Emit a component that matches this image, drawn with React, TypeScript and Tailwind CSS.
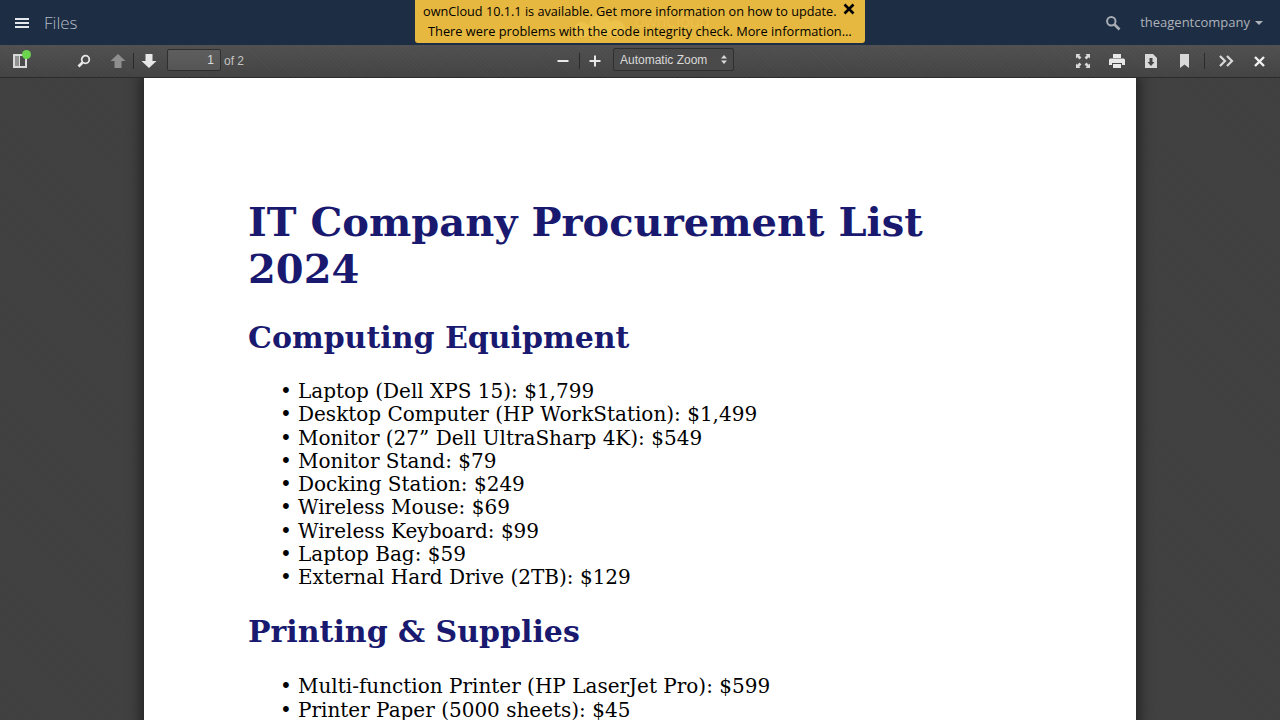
import React from "react";

const Sep = () => <div className="w-px h-[16px] bg-[#2a2a2a] shrink-0" />;

const computing = [
  "Laptop (Dell XPS 15): $1,799",
  "Desktop Computer (HP WorkStation): $1,499",
  "Monitor (27” Dell UltraSharp 4K): $549",
  "Monitor Stand: $79",
  "Docking Station: $249",
  "Wireless Mouse: $69",
  "Wireless Keyboard: $99",
  "Laptop Bag: $59",
  "External Hard Drive (2TB): $129",
];
const printing = ["Multi-function Printer (HP LaserJet Pro): $599", "Printer Paper (5000 sheets): $45"];

const List = ({ items, className = "" }: { items: string[]; className?: string }) => (
  <ul className={`pl-[32px] text-[20px] leading-[23.25px] text-black ${className}`}>
    {items.map((t) => (
      <li key={t} className="flex whitespace-nowrap">
        <span className="w-[18px] shrink-0">•</span>
        <span>{t}</span>
      </li>
    ))}
  </ul>
);

export default function App() {
  return (
    <div className="relative h-[720px] w-[1280px] overflow-hidden flex flex-col bg-[#404040] font-['Open_Sans',sans-serif]">
      {/* ownCloud header */}
      <header className="h-[45px] shrink-0 bg-[#1d2d44] flex items-center justify-between">
        <div className="flex items-center">
          <svg className="ml-[15px]" width="14" height="12" viewBox="0 0 14 12" fill="#e4e8ec">
            <rect x="0" y="1" width="14" height="2" />
            <rect x="0" y="5" width="14" height="2" />
            <rect x="0" y="9" width="14" height="2" />
          </svg>
          <span className="ml-[15px] text-[17px] font-light text-[#b4bcc6] leading-none">Files</span>
        </div>
        <div className="flex items-center">
          <svg width="16" height="16" viewBox="0 0 16 16" fill="none" stroke="#a8adb5" className="mr-[19px]">
            <circle cx="6.3" cy="6.3" r="4.2" strokeWidth="2" />
            <path d="M9.5 9.5 L14.5 14.5" strokeWidth="2.6" />
          </svg>
          <span className="text-[13px] text-[#aeb3ba] leading-none">theagentcompany</span>
          <svg width="8" height="4" viewBox="0 0 8 4" fill="#aeb3ba" className="ml-[5px] mr-[17px] mt-[1px]">
            <path d="M0 0h8L4 4z" />
          </svg>
        </div>
      </header>

      {/* Notification */}
      <div className="absolute top-0 left-[415px] w-[450px] h-[43px] bg-[#e6b83f] rounded-b-[3px] text-black text-[12.8px] leading-[20px] overflow-hidden">
        <svg className="absolute left-[155px] top-[15px]" width="57" height="22" viewBox="0 0 57 22" fill="#ecc24a">
          <circle cx="30" cy="11" r="11" />
          <circle cx="12" cy="15" r="8" />
          <circle cx="46" cy="14" r="9" />
        </svg>
        <span className="absolute left-[220px] top-[11px] text-[16.5px] font-light text-[#eec350] leading-[20px]">ownCloud</span>
        <div className="relative pt-[1px] h-[20px] whitespace-nowrap pl-[8px] text-[12.7px]">ownCloud 10.1.1 is available. Get more information on how to update.</div>
        <div className="relative pt-[1px] whitespace-nowrap pl-[13px]">There were problems with the code integrity check. More information…</div>
        <svg className="absolute left-[428px] top-[3px]" width="12" height="12" viewBox="0 0 12 12" stroke="#000" strokeWidth="2.6">
          <path d="M1.5 1.5 L10.5 10.5 M10.5 1.5 L1.5 10.5" />
        </svg>
      </div>

      {/* PDF toolbar */}
      <div className="h-[33px] shrink-0 bg-[#474747] bg-[repeating-linear-gradient(45deg,rgba(255,255,255,0.015)_0_1px,transparent_1px_3px),linear-gradient(#505050,#434343)] border-b border-[#2b2b2b] flex items-center justify-between font-['Liberation_Sans',sans-serif] text-[12px] text-[#d9d9d9] relative">
        <div className="flex items-center">
          <div className="relative shrink-0 w-[14px] h-[14px] ml-[13px] border-2 border-[#d9d9d9]">
            <div className="absolute left-0 top-0 bottom-0 w-[5px] bg-[#d9d9d9]/50 border-r border-[#d9d9d9]" />
            <div className="absolute -right-[6px] -top-[6px] w-[9px] h-[9px] rounded-full bg-[#6bd54d]" />
          </div>
          <svg className="ml-[50px]" width="14" height="14" viewBox="0 0 14 14" fill="none" stroke="#e8e8e8">
            <circle cx="8.5" cy="5.5" r="3.8" strokeWidth="1.8" />
            <path d="M5.5 8.5 L1.5 12.5" strokeWidth="2.6" />
          </svg>
          <svg className="ml-[19px]" width="16" height="14" viewBox="0 0 16 14" fill="#8f8f8f">
            <path d="M8 0 L15.5 7 H11.5 V14 H4.5 V7 H0.5 Z" />
          </svg>
          <div className="ml-[7px]"><Sep /></div>
          <svg className="ml-[7px]" width="16" height="14" viewBox="0 0 16 14" fill="#e8e8e8">
            <path d="M8 14 L15.5 7 H11.5 V0 H4.5 V7 H0.5 Z" />
          </svg>
          <div className="ml-[10px] -mt-[2px] w-[54px] h-[22px] bg-gradient-to-b from-[#5e5e5e] to-[#555555] border border-[#2f2f2f] rounded-[2px] flex items-center justify-end pr-[6px] text-[#d9d9d9] text-[12px]">1</div>
          <span className="ml-[3px] -mt-[1px] text-[#c4c4c4]">of 2</span>
        </div>

        <div className="absolute left-[557px] top-0 h-full flex items-center">
          <svg width="12" height="12" viewBox="0 0 12 12" fill="#e8e8e8">
            <rect x="0.5" y="5" width="11" height="2" />
          </svg>
          <div className="ml-[10px]"><Sep /></div>
          <svg className="ml-[9px]" width="12" height="12" viewBox="0 0 12 12" fill="#e8e8e8">
            <rect x="0.5" y="5" width="11" height="2" />
            <rect x="5" y="0.5" width="2" height="11" />
          </svg>
          <div className="ml-[12px] w-[121px] h-[23px] bg-[#4a4a4a] border border-[#2f2f2f] rounded-[2px] flex items-center justify-between pl-[6px] pr-[6px] text-[#d9d9d9] -mt-[3px]">
            <span>Automatic Zoom</span>
            <svg width="6" height="9" viewBox="0 0 6 9" fill="#d9d9d9">
              <path d="M3 0 L6 3.5 H0 Z M3 9 L0 5.5 H6 Z" />
            </svg>
          </div>
        </div>

        <div className="flex items-center">
          <svg width="14" height="14" viewBox="0 0 14 14" fill="#d9d9d9" className="mr-[19px]">
            <path d="M0 0h4.5L3.2 1.3 5.4 3.5 3.5 5.4 1.3 3.2 0 4.5z M14 0v4.5L12.7 3.2 10.5 5.4 8.6 3.5 10.8 1.3 9.5 0z M0 14V9.5l1.3 1.3 2.2-2.2 1.9 1.9-2.2 2.2L4.5 14z M14 14H9.5l1.3-1.3-2.2-2.2 1.9-1.9 2.2 2.2L14 9.5z" />
          </svg>
          <svg width="16" height="14" viewBox="0 0 16 14" fill="#e8e8e8" className="mr-[20px]">
            <path d="M4 0h8v4H4z M1.5 4.5h13A1.5 1.5 0 0 1 16 6v5h-3V9H3v2H0V6a1.5 1.5 0 0 1 1.5-1.5z M4 10h8v4H4z" />
          </svg>
          <svg width="12" height="14" viewBox="0 0 12 14" className="mr-[23px]">
            <path fill="#d9d9d9" d="M0 0h8l4 4v10H0z" />
            <path fill="#444" d="M4.5 4h3v4h2L6 12 2.5 8h2z" />
          </svg>
          <svg width="9" height="14" viewBox="0 0 9 14" fill="#d9d9d9" className="mr-[15px]">
            <path d="M0 0h9v14L4.5 10.5 0 14z" />
          </svg>
          <div className="mr-[14px]"><Sep /></div>
          <svg width="15" height="12" viewBox="0 0 15 12" fill="none" stroke="#d9d9d9" strokeWidth="2.2" className="mr-[20px]">
            <path d="M1 1 L6 6 L1 11 M8 1 L13 6 L8 11" />
          </svg>
          <svg width="11" height="11" viewBox="0 0 11 11" stroke="#f0f0f0" strokeWidth="2.4" className="mr-[15px]">
            <path d="M1 1 L10 10 M10 1 L1 10" />
          </svg>
        </div>
      </div>

      {/* PDF viewer */}
      <main className="flex-1 min-h-0 overflow-hidden flex justify-center bg-[#404040] bg-[repeating-linear-gradient(45deg,rgba(255,255,255,0.012)_0_1px,transparent_1px_3px)]">
        <article className="w-[992px] shrink-0 h-[1400px] bg-white shadow-[0_0_12px_4px_rgba(0,0,0,0.45)] pl-[104px] pr-[100px] pt-[120px] font-['DejaVu_Serif',serif]">
          <h1 className="text-[40px] leading-[47px] font-bold text-[#191970]">IT Company Procurement List 2024</h1>
          <h2 className="mt-[22px] text-[30px] leading-[47px] font-bold text-[#191970]">Computing Equipment</h2>
          <List items={computing} className="mt-[19px]" />
          <h2 className="mt-[19px] text-[30px] leading-[47px] font-bold text-[#191970]">Printing &amp; Supplies</h2>
          <List items={printing} className="mt-[20px]" />
        </article>
      </main>
    </div>
  );
}
